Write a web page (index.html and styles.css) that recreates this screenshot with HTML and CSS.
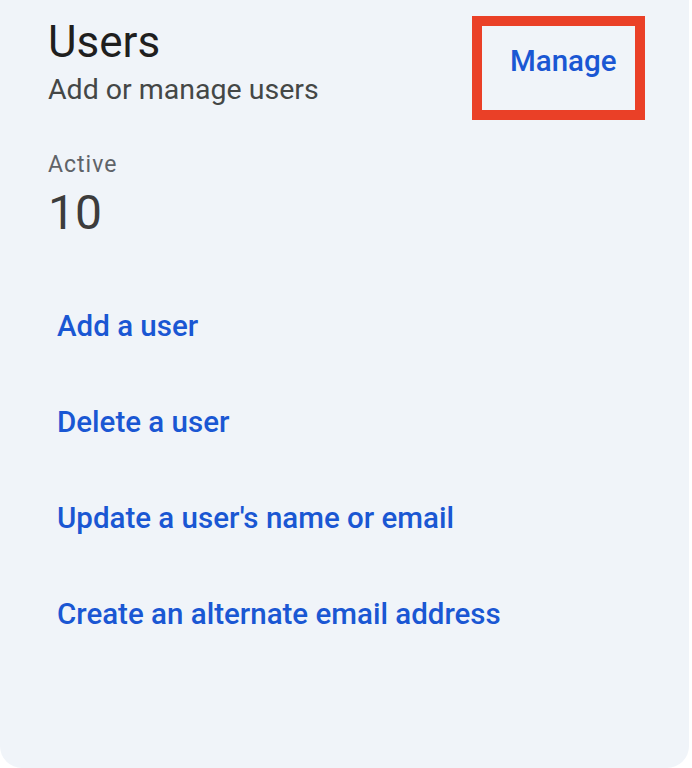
FILE: index.html
```html
<!DOCTYPE html>
<html lang="en">
<head>
<meta charset="utf-8">
<link rel="stylesheet" href="styles.css">
</head>
<body>
<div class="card">
  <div class="header">
    <div class="titles">
      <h1 class="title">Users</h1>
      <div class="subtitle">Add or manage users</div>
    </div>
    <div class="highlight">
      <a class="manage" href="#">Manage</a>
    </div>
  </div>
  <div class="stat">
    <div class="stat-label">Active</div>
    <div class="stat-value">10</div>
  </div>
  <ul class="links">
    <li><a href="#">Add a user</a></li>
    <li><a href="#">Delete a user</a></li>
    <li><a href="#">Update a user's name or email</a></li>
    <li><a href="#">Create an alternate email address</a></li>
  </ul>
</div>
</body>
</html>
```

FILE: styles.css
```css
html, body {
  margin: 0;
  padding: 0;
  background: #ffffff;
}
body {
  font-family: Roboto, "Noto Sans", Arial, sans-serif;
}
.card {
  box-sizing: border-box;
  width: 689px;
  height: 768px;
  background: #f0f4f9;
  border-radius: 0 0 22px 22px;
  padding: 16px 44px 0 48px;
}
.header {
  display: flex;
  justify-content: space-between;
  align-items: flex-start;
}
.title {
  margin: 0;
  font-size: 44px;
  font-weight: 400;
  line-height: 52px;
  color: #1f1f1f;
}
.subtitle {
  font-size: 28.5px;
  line-height: 44px;
  color: #444746;
}
.highlight {
  box-sizing: border-box;
  width: 173px;
  height: 104px;
  border: 10px solid #ea4027;
  display: flex;
  align-items: flex-start;
  justify-content: flex-start;
  padding: 17px 0 0 28px;
}
.manage {
  font-size: 29.5px;
  line-height: 36px;
  color: #1a57d3;
  text-decoration: none;
  font-weight: 500;
}
.stat {
  margin-top: 31px;
}
.stat-label {
  font-size: 23px;
  line-height: 28px;
  letter-spacing: 1px;
  color: #5f6368;
}
.stat-value {
  margin-top: 6px;
  font-size: 48px;
  line-height: 56px;
  color: #3c3c3c;
}
.links {
  list-style: none;
  margin: 67px 0 0 0;
  padding: 0 0 0 9px;
  display: flex;
  flex-direction: column;
  gap: 60px;
}
.links li {
  font-size: 29.5px;
  line-height: 36px;
}
.links a {
  color: #1a57d3;
  text-decoration: none;
  font-weight: 500;
}
```
